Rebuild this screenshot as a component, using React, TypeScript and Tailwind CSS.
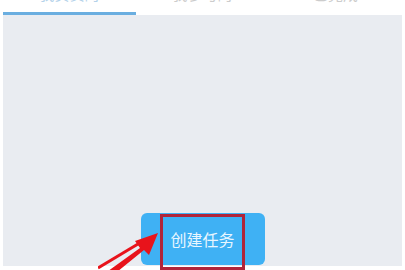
import { useState } from 'react';

const tabs = ['我负责的', '我参与的', '已完成'];

function Arrow() {
  return (
    <svg className="absolute left-[98px] top-[226px]" width="70" height="48" viewBox="0 0 70 48">
      <path d="M6 48 L42 22 L37 15 L60 7 L51 29 L46 24 L14 50 Z" fill="#e8131b" />
      <path d="M0 42 L40 18" stroke="#e8131b" strokeWidth="3" />
    </svg>
  );
}

export default function App() {
  const [active, setActive] = useState(0);

  return (
    <div className="relative w-[405px] h-[270px] overflow-hidden bg-white font-['Noto_Sans_CJK_SC',sans-serif]">
      <div className="flex px-[3px] h-[15px]">
        {tabs.map((t, i) => (
          <button
            key={t}
            onClick={() => setActive(i)}
            className={`flex-1 h-[15px] overflow-hidden flex flex-col items-center justify-start ${
              i === active ? 'border-b-[3px] border-[#6aaee0]' : ''
            }`}
          >
            <span
              className={`mt-[-15px] text-[15px] leading-[17px] ${
                i === active ? 'text-[#b4d2ea]' : 'text-[#cccccc]'
              }`}
            >
              {t}
            </span>
          </button>
        ))}
      </div>
      <div className="mx-[3px] h-[251px] bg-[#e9ecf1] flex flex-col items-center justify-end pb-[1px]">
        <button className="w-[124px] h-[52px] rounded-[6px] bg-[#3fb1f4] flex justify-center items-start">
          <span className="border-[3px] border-[#b0243a] w-[85px] h-[56px] mt-[1px] flex items-center justify-center pb-[6px] text-[16px] text-[#e8f6ff]">
            创建任务
          </span>
        </button>
      </div>
      <Arrow />
    </div>
  );
}
